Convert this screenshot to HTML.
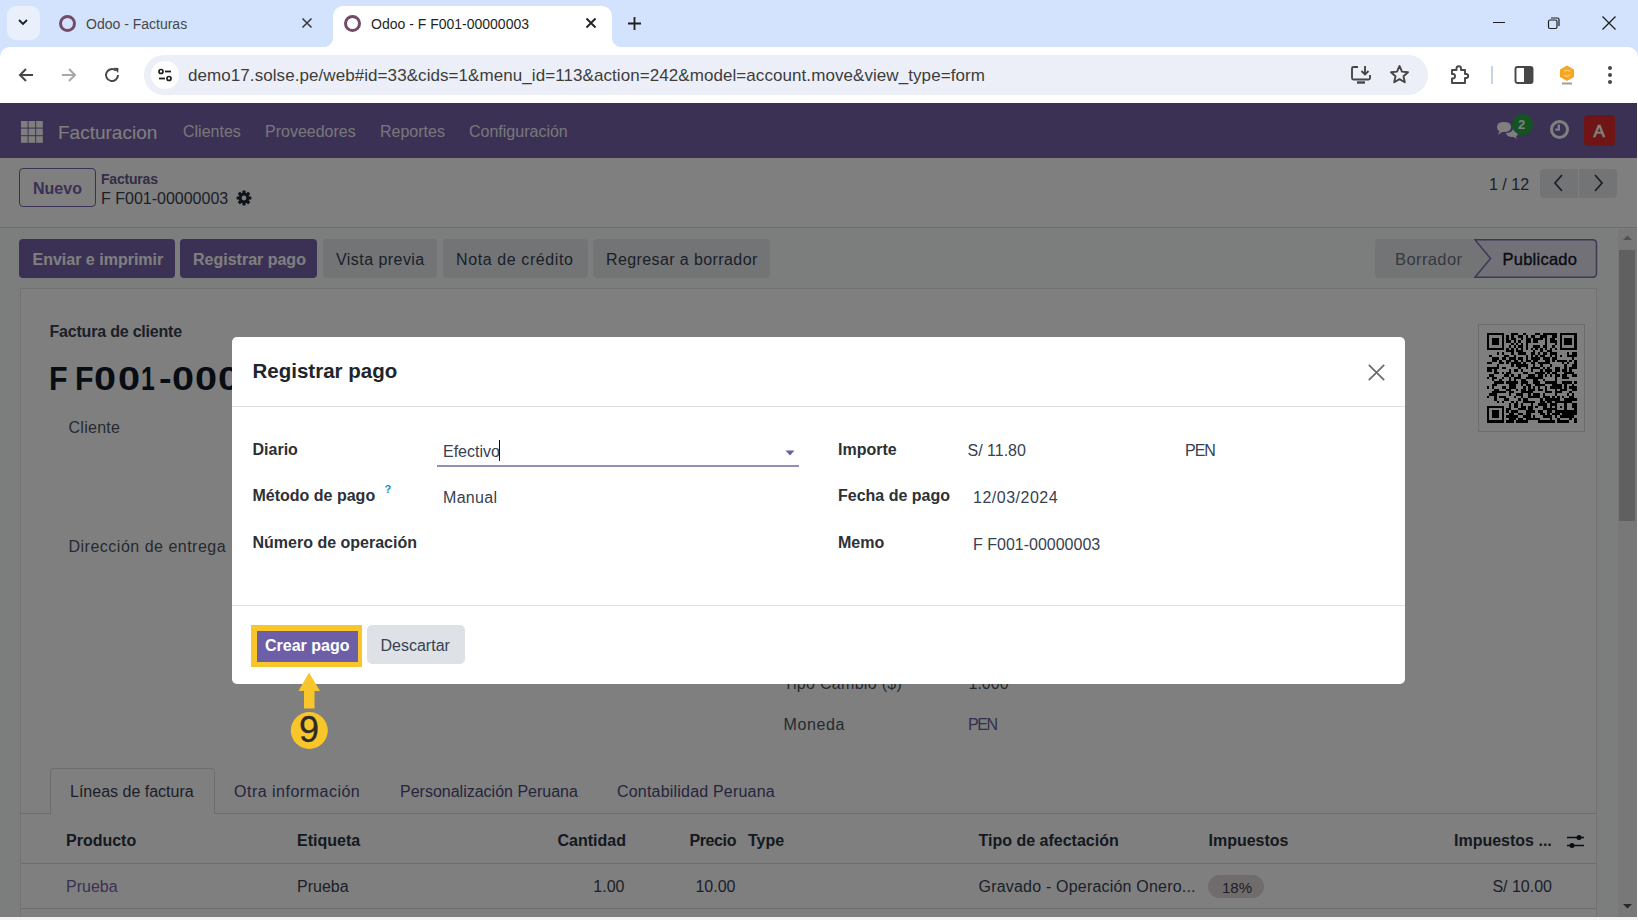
<!DOCTYPE html>
<html><head><meta charset="utf-8">
<style>
*{box-sizing:border-box;margin:0;padding:0}
html,body{width:1638px;height:920px;overflow:hidden;background:#fff;font-family:"Liberation Sans",sans-serif}
.a{position:absolute}
.t{position:absolute;line-height:1;white-space:nowrap}
#chrome{position:absolute;left:0;top:0;width:1638px;height:103px;background:#d3e3fd}
#toolbar{position:absolute;left:0;top:46.5px;width:1638px;height:56.5px;background:#fff;border-radius:10px 10px 0 0}
#page{position:absolute;left:0;top:103px;width:1637px;height:814px;background:#f9fafb;overflow:hidden}
#navbar{position:absolute;left:0;top:0;width:1637px;height:55px;background:#7763a8}
#cp{position:absolute;left:0;top:55px;width:1637px;height:70px;background:#fff;border-bottom:1px solid #d8dadd}
#backdrop{position:absolute;left:0;top:103px;width:1637px;height:814px;background:rgba(0,0,0,.5)}
#modal{position:absolute;left:232px;top:337px;width:1173px;height:347px;background:#fff;border-radius:5px}
</style></head><body>
<div id="chrome">
  <!-- tab search -->
  <div class="a" style="left:7px;top:6px;width:33px;height:34px;border-radius:9px;background:#e9effb"></div>
  <svg class="a" style="left:16px;top:15px" width="14" height="14" viewBox="0 0 14 14"><path d="M3 5 L7 9 L11 5" fill="none" stroke="#1f1f1f" stroke-width="1.8"/></svg>
  <!-- tab 1 -->
  <div class="a" style="left:59px;top:15px;width:17px;height:17px;border-radius:50%;border:3.2px solid #714b67"></div>
  <div class="t" style="left:86px;top:17px;font-size:14px;color:#474747">Odoo - Facturas</div>
  <svg class="a" style="left:300px;top:16px" width="14" height="14" viewBox="0 0 14 14"><path d="M2.5 2.5 L11.5 11.5 M11.5 2.5 L2.5 11.5" stroke="#3c3c3c" stroke-width="1.6"/></svg>
  <!-- active tab -->
  <div class="a" style="left:333px;top:6px;width:279px;height:41px;background:#fff;border-radius:10px 10px 0 0"></div>
  <div class="a" style="left:323px;top:37px;width:10px;height:10px;background:radial-gradient(circle at 0 0,transparent 10px,#fff 10.5px)"></div>
  <div class="a" style="left:612px;top:37px;width:10px;height:10px;background:radial-gradient(circle at 100% 0,transparent 10px,#fff 10.5px)"></div>
  <div class="a" style="left:344px;top:15px;width:17px;height:17px;border-radius:50%;border:3.2px solid #714b67"></div>
  <div class="t" style="left:371px;top:17px;font-size:14px;color:#1f1f1f">Odoo - F F001-00000003</div>
  <svg class="a" style="left:584px;top:16px" width="14" height="14" viewBox="0 0 14 14"><path d="M2.5 2.5 L11.5 11.5 M11.5 2.5 L2.5 11.5" stroke="#1f1f1f" stroke-width="1.8"/></svg>
  <!-- new tab -->
  <svg class="a" style="left:626px;top:15px" width="17" height="17" viewBox="0 0 17 17"><path d="M8.5 2 V15 M2 8.5 H15" stroke="#1f1f1f" stroke-width="1.8"/></svg>
  <!-- window controls -->
  <div class="a" style="left:1493px;top:22px;width:12px;height:1.2px;background:#1f1f1f"></div>
  <svg class="a" style="left:1546px;top:15px" width="16" height="16" viewBox="0 0 16 16"><rect x="2.5" y="5" width="8.5" height="8.5" rx="1.5" fill="none" stroke="#1f1f1f" stroke-width="1.2"/><path d="M5 3 H11.5 Q13 3 13 4.5 V11" fill="none" stroke="#1f1f1f" stroke-width="1.2"/></svg>
  <svg class="a" style="left:1601px;top:15px" width="16" height="16" viewBox="0 0 16 16"><path d="M1.5 1.5 L14.5 14.5 M14.5 1.5 L1.5 14.5" stroke="#1f1f1f" stroke-width="1.3"/></svg>
</div>
<div id="toolbar">
  <svg class="a" style="left:17px;top:19px" width="18" height="18" viewBox="0 0 18 18"><path d="M16 9 H3 M9 3 L3 9 L9 15" fill="none" stroke="#474747" stroke-width="2"/></svg>
  <svg class="a" style="left:60px;top:19px" width="18" height="18" viewBox="0 0 18 18"><path d="M2 9 H15 M9 3 L15 9 L9 15" fill="none" stroke="#a8a8a8" stroke-width="2"/></svg>
  <svg class="a" style="left:103px;top:19px" width="18" height="18" viewBox="0 0 18 18"><path d="M15 9 A6 6 0 1 1 12.8 4.4" fill="none" stroke="#474747" stroke-width="2"/><path d="M10.5 1.8 L15.5 2 L15.2 7 Z" fill="#474747"/></svg>
  <div class="a" style="left:144px;top:8px;width:1284px;height:40px;border-radius:20px;background:#eceff7"></div>
  <div class="a" style="left:151px;top:14px;width:28px;height:28px;border-radius:50%;background:#fff"></div>
  <svg class="a" style="left:156px;top:19px" width="18" height="18" viewBox="0 0 18 18"><circle cx="5" cy="5.5" r="2" fill="none" stroke="#1f1f1f" stroke-width="1.7"/><path d="M9 5.5 H15" stroke="#1f1f1f" stroke-width="1.8"/><circle cx="13" cy="12.5" r="2" fill="none" stroke="#1f1f1f" stroke-width="1.7"/><path d="M3 12.5 H9" stroke="#1f1f1f" stroke-width="1.8"/></svg>
  <!-- right toolbar icons (toolbar top 46) -->
  <svg class="a" style="left:1350px;top:17px" width="22" height="22" viewBox="0 0 22 22"><path d="M8 3 H3.5 Q2 3 2 4.5 V14 Q2 15.5 3.5 15.5 H18.5 Q20 15.5 20 14 V11" fill="none" stroke="#474747" stroke-width="1.9"/><path d="M15 2 V10 M11.5 7 L15 10.5 L18.5 7" fill="none" stroke="#474747" stroke-width="1.9"/><path d="M7 18.5 H15" stroke="#474747" stroke-width="2.4"/></svg>
  <svg class="a" style="left:1389px;top:17px" width="21" height="21" viewBox="0 0 21 21"><path d="M10.5 2 L13 7.6 L19 8.2 L14.5 12.2 L15.8 18.2 L10.5 15.1 L5.2 18.2 L6.5 12.2 L2 8.2 L8 7.6Z" fill="none" stroke="#474747" stroke-width="1.9" stroke-linejoin="round"/></svg>
  <svg class="a" style="left:1449px;top:17px" width="22" height="22" viewBox="0 0 22 22"><path d="M3 6 H7.5 V4.5 Q7.5 2.3 9.8 2.3 Q12 2.3 12 4.5 V6 H16 V10 H17 Q19.2 10 19.2 12 Q19.2 14 17 14 H16 V19 H3 V14.5 H4 Q6 14.5 6 12.3 Q6 10 4 10 H3Z" fill="none" stroke="#474747" stroke-width="1.9" stroke-linejoin="round"/></svg>
  <div class="a" style="left:1491px;top:19px;width:1.5px;height:18px;background:#c7d3e8"></div>
  <svg class="a" style="left:1514px;top:18px" width="20" height="20" viewBox="0 0 20 20"><rect x="1.5" y="2" width="17" height="16" rx="2" fill="none" stroke="#474747" stroke-width="1.9"/><rect x="10" y="2" width="8.5" height="16" fill="#474747"/></svg>
  <svg class="a" style="left:1557px;top:17px" width="20" height="22" viewBox="0 0 20 22"><path d="M10 1.5 L17 5.5 V13 L10 17 L3 13 V5.5Z" fill="#f5a623"/><path d="M7 7.5 Q10 5 13 7.5 M7 11 Q10 13.5 13 11" fill="none" stroke="#ffd27a" stroke-width="1.2"/><rect x="5" y="18.5" width="10" height="2" fill="#9aa0a6"/></svg>
  <svg class="a" style="left:1603px;top:17px" width="14" height="22" viewBox="0 0 14 22"><circle cx="7" cy="4" r="2" fill="#474747"/><circle cx="7" cy="11" r="2" fill="#474747"/><circle cx="7" cy="18" r="2" fill="#474747"/></svg>
  <div class="t" style="left:188px;top:20px;font-size:17px;letter-spacing:.07px;color:#3d3d3d">demo17.solse.pe/web#id=33&amp;cids=1&amp;menu_id=113&amp;action=242&amp;model=account.move&amp;view_type=form</div>
</div>
<div id="page">
  <div id="navbar">
    <svg class="a" style="left:21px;top:17.5px" width="22" height="22" viewBox="0 0 22 22" fill="#fff"><rect x="0" y="0" width="6.6" height="6.6"/><rect x="7.6" y="0" width="6.6" height="6.6"/><rect x="15.2" y="0" width="6.6" height="6.6"/><rect x="0" y="7.6" width="6.6" height="6.6"/><rect x="7.6" y="7.6" width="6.6" height="6.6"/><rect x="15.2" y="7.6" width="6.6" height="6.6"/><rect x="0" y="15.2" width="6.6" height="6.6"/><rect x="7.6" y="15.2" width="6.6" height="6.6"/><rect x="15.2" y="15.2" width="6.6" height="6.6"/></svg>
    <div class="t" style="left:58px;top:19.9px;font-size:19px;color:#fff">Facturacion</div>
    <div class="t" style="left:183px;top:20.5px;font-size:16px;color:rgba(255,255,255,.9)">Clientes</div>
    <div class="t" style="left:265px;top:20.5px;font-size:16px;color:rgba(255,255,255,.9)">Proveedores</div>
    <div class="t" style="left:380px;top:20.5px;font-size:16px;color:rgba(255,255,255,.9)">Reportes</div>
    <div class="t" style="left:469px;top:20.5px;font-size:16px;color:rgba(255,255,255,.9)">Configuración</div>
    <!-- chat icon -->
    <svg class="a" style="left:1496px;top:17px" width="24" height="20" viewBox="0 0 24 20"><path d="M1 7 Q1 2 8 2 Q15 2 15 7 Q15 12 8 12 L6 12 L2 15 L3.5 11 Q1 10 1 7Z" fill="#fff"/><path d="M10 13 Q16 13 17 9 Q22 10 22 13 Q22 15.5 20 16.5 L21 19 L17.5 17 Q11 17.5 10 13Z" fill="#fff"/></svg>
    <div class="a" style="left:1512px;top:11px;width:21px;height:21px;border-radius:50%;background:#28a745"></div>
    <div class="t" style="left:1518px;top:15px;font-size:13px;font-weight:700;color:#fff">2</div>
    <!-- clock -->
    <div class="a" style="left:1549.5px;top:16.5px;width:19px;height:19px;border-radius:50%;border:3.2px solid #fff"></div>
    <svg class="a" style="left:1549px;top:16px" width="20" height="20" viewBox="0 0 20 20"><path d="M9.8 5.5 V10.6 H6.3" fill="none" stroke="#fff" stroke-width="2.4"/></svg>
    <div class="a" style="left:1584px;top:12px;width:31px;height:31px;border-radius:4px;background:#de2a2a"></div>
    <div class="t" style="left:1593.5px;top:19.5px;font-size:17px;color:#fff;-webkit-text-stroke:.7px #fff">A</div>
  </div>
  <div id="cp">
    <div class="a" style="left:19px;top:10px;width:77px;height:39px;border:1px solid #7763a8;border-radius:4px"></div>
    <div class="t" style="left:33px;top:22.5px;font-size:16px;font-weight:700;color:#7763a8">Nuevo</div>
    <div class="t" style="left:101px;top:14px;font-size:14px;font-weight:700;letter-spacing:-.2px;color:#6a5a8e">Facturas</div>
    <div class="t" style="left:101px;top:32.5px;font-size:16px;color:#374151">F F001-00000003</div>
    <svg class="a" style="left:236.4px;top:32px" width="16" height="16" viewBox="0 0 16 16" fill="#1f2937"><rect x="6.4" y="0.6" width="3.2" height="4" rx="0.6" transform="rotate(0 8 8)"/><rect x="6.4" y="0.6" width="3.2" height="4" rx="0.6" transform="rotate(45 8 8)"/><rect x="6.4" y="0.6" width="3.2" height="4" rx="0.6" transform="rotate(90 8 8)"/><rect x="6.4" y="0.6" width="3.2" height="4" rx="0.6" transform="rotate(135 8 8)"/><rect x="6.4" y="0.6" width="3.2" height="4" rx="0.6" transform="rotate(180 8 8)"/><rect x="6.4" y="0.6" width="3.2" height="4" rx="0.6" transform="rotate(225 8 8)"/><rect x="6.4" y="0.6" width="3.2" height="4" rx="0.6" transform="rotate(270 8 8)"/><rect x="6.4" y="0.6" width="3.2" height="4" rx="0.6" transform="rotate(315 8 8)"/><path fill-rule="evenodd" d="M8 2.6 A5.4 5.4 0 1 1 8 13.4 A5.4 5.4 0 1 1 8 2.6Z M8 5.6 A2.4 2.4 0 1 0 8 10.4 A2.4 2.4 0 1 0 8 5.6Z"/></svg>
    <div class="t" style="left:1489px;top:18.9px;font-size:16px;color:#374151">1 / 12</div>
    <div class="a" style="left:1540px;top:10.5px;width:38px;height:29.5px;background:#e7e9ed;border-radius:4px 0 0 4px"></div>
    <div class="a" style="left:1579px;top:10.5px;width:38px;height:29.5px;background:#e7e9ed;border-radius:0 4px 4px 0"></div>
    <svg class="a" style="left:1550px;top:15px" width="18" height="20" viewBox="0 0 18 20"><path d="M12 2 L5 10 L12 18" fill="none" stroke="#374151" stroke-width="1.8"/></svg>
    <svg class="a" style="left:1589px;top:15px" width="18" height="20" viewBox="0 0 18 20"><path d="M6 2 L13 10 L6 18" fill="none" stroke="#374151" stroke-width="1.8"/></svg>
  </div>
  <!-- action buttons (page coords: top 103) -->
  <div class="a" style="left:19px;top:136px;width:156px;height:39px;background:#7763a8;border-radius:4px"></div>
  <div class="t" style="left:32.5px;top:148.5px;font-size:16px;font-weight:700;color:#fff">Enviar e imprimir</div>
  <div class="a" style="left:180px;top:136px;width:137px;height:39px;background:#7763a8;border-radius:4px"></div>
  <div class="t" style="left:193px;top:148.5px;font-size:16px;font-weight:700;color:#fff">Registrar pago</div>
  <div class="a" style="left:323px;top:136px;width:114px;height:39px;background:#e7e9ed;border-radius:4px"></div>
  <div class="t" style="left:336px;top:148.5px;font-size:16px;color:#374151;letter-spacing:.45px">Vista previa</div>
  <div class="a" style="left:443px;top:136px;width:145px;height:39px;background:#e7e9ed;border-radius:4px"></div>
  <div class="t" style="left:456px;top:148.5px;font-size:16px;color:#374151;letter-spacing:.6px">Nota de crédito</div>
  <div class="a" style="left:593px;top:136px;width:177px;height:39px;background:#e7e9ed;border-radius:4px"></div>
  <div class="t" style="left:606px;top:148.5px;font-size:16px;color:#374151;letter-spacing:.4px">Regresar a borrador</div>
  <!-- statusbar -->
  <div class="a" style="left:1375px;top:136px;width:222px;height:39px;background:#e7e9ed;border-radius:4px"></div>
  <svg class="a" style="left:1474px;top:136px" width="124" height="39" viewBox="0 0 124 39"><path d="M1 0.75 H118.5 Q122.5 0.75 122.5 4.75 V34.25 Q122.5 38.25 118.5 38.25 H1 L16.5 19.5 Z" fill="#e6e2f0" stroke="#7a70a8" stroke-width="1.5"/></svg>
  <div class="t" style="left:1395px;top:147.8px;font-size:16.5px;letter-spacing:.4px;color:#6b7280">Borrador</div>
  <div class="t" style="left:1502.5px;top:147.8px;font-size:16.5px;letter-spacing:.25px;color:#111827;-webkit-text-stroke:.35px #111827">Publicado</div>
  <!-- sheet -->
  <div class="a" style="left:20px;top:185px;width:1577px;height:700px;background:#fff;border:1px solid #e3e5e8"></div>
  <div class="t" style="left:49.5px;top:220.5px;font-size:16px;font-weight:700;color:#374151;letter-spacing:-0.2px">Factura de cliente</div>
  
  <div class="t" style="left:49.2px;top:258.5px;font-size:33px;font-weight:700;color:#111827;transform:scaleX(0.92);transform-origin:0 0">F</div><div class="t" style="left:75.4px;top:258.5px;font-size:33px;font-weight:700;color:#111827;transform:scaleX(0.92);transform-origin:0 0">F</div><div class="t" style="left:93.8px;top:258.5px;font-size:33px;font-weight:700;color:#111827;transform:scaleX(1.2);transform-origin:0 0">0</div><div class="t" style="left:117.6px;top:258.5px;font-size:33px;font-weight:700;color:#111827;transform:scaleX(1.2);transform-origin:0 0">0</div><div class="t" style="left:141.1px;top:258.5px;font-size:33px;font-weight:700;color:#111827;transform:scaleX(0.75);transform-origin:0 0">1</div><div class="t" style="left:159.1px;top:258.5px;font-size:33px;font-weight:700;color:#111827;transform:scaleX(1.15);transform-origin:0 0">-</div><div class="t" style="left:171.9px;top:258.5px;font-size:33px;font-weight:700;color:#111827;transform:scaleX(1.2);transform-origin:0 0">0</div><div class="t" style="left:195.1px;top:258.5px;font-size:33px;font-weight:700;color:#111827;transform:scaleX(1.2);transform-origin:0 0">0</div><div class="t" style="left:218.3px;top:258.5px;font-size:33px;font-weight:700;color:#111827;transform:scaleX(1.2);transform-origin:0 0">0</div><div class="t" style="left:241.5px;top:258.5px;font-size:33px;font-weight:700;color:#111827;transform:scaleX(1.2);transform-origin:0 0">0</div>
  <div class="t" style="left:68.5px;top:316.5px;font-size:16px;color:#4b5563;letter-spacing:.27px">Cliente</div>
  <div class="t" style="left:68.5px;top:436px;font-size:16px;color:#4b5563;letter-spacing:.5px">Dirección de entrega</div>
  <!-- qr -->
  <div class="a" style="left:1478px;top:220.5px;width:107px;height:108px;border:1px solid #d8dadd;background:#fff"></div>
  <div id="qr" class="a" style="left:1486.5px;top:229.5px;width:90px;height:90px"><svg width="90" height="90" viewBox="0 0 90 90" fill="#000" shape-rendering="crispEdges"><rect x="0.00" y="0.00" width="16.93" height="2.42"/><rect x="24.19" y="0.00" width="7.26" height="2.42"/><rect x="36.28" y="0.00" width="2.42" height="2.42"/><rect x="48.38" y="0.00" width="4.84" height="2.42"/><rect x="55.64" y="0.00" width="14.51" height="2.42"/><rect x="72.57" y="0.00" width="16.93" height="2.42"/><rect x="0.00" y="2.42" width="2.42" height="2.42"/><rect x="14.51" y="2.42" width="2.42" height="2.42"/><rect x="19.35" y="2.42" width="2.42" height="2.42"/><rect x="24.19" y="2.42" width="2.42" height="2.42"/><rect x="31.45" y="2.42" width="4.84" height="2.42"/><rect x="38.70" y="2.42" width="2.42" height="2.42"/><rect x="43.54" y="2.42" width="4.84" height="2.42"/><rect x="53.22" y="2.42" width="7.26" height="2.42"/><rect x="65.31" y="2.42" width="4.84" height="2.42"/><rect x="72.57" y="2.42" width="2.42" height="2.42"/><rect x="87.08" y="2.42" width="2.42" height="2.42"/><rect x="0.00" y="4.84" width="2.42" height="2.42"/><rect x="4.84" y="4.84" width="7.26" height="2.42"/><rect x="14.51" y="4.84" width="2.42" height="2.42"/><rect x="19.35" y="4.84" width="2.42" height="2.42"/><rect x="24.19" y="4.84" width="4.84" height="2.42"/><rect x="33.86" y="4.84" width="2.42" height="2.42"/><rect x="38.70" y="4.84" width="4.84" height="2.42"/><rect x="45.96" y="4.84" width="9.68" height="2.42"/><rect x="58.05" y="4.84" width="2.42" height="2.42"/><rect x="62.89" y="4.84" width="4.84" height="2.42"/><rect x="72.57" y="4.84" width="2.42" height="2.42"/><rect x="77.41" y="4.84" width="7.26" height="2.42"/><rect x="87.08" y="4.84" width="2.42" height="2.42"/><rect x="0.00" y="7.26" width="2.42" height="2.42"/><rect x="4.84" y="7.26" width="7.26" height="2.42"/><rect x="14.51" y="7.26" width="2.42" height="2.42"/><rect x="19.35" y="7.26" width="4.84" height="2.42"/><rect x="26.61" y="7.26" width="2.42" height="2.42"/><rect x="31.45" y="7.26" width="2.42" height="2.42"/><rect x="38.70" y="7.26" width="4.84" height="2.42"/><rect x="45.96" y="7.26" width="4.84" height="2.42"/><rect x="58.05" y="7.26" width="2.42" height="2.42"/><rect x="62.89" y="7.26" width="7.26" height="2.42"/><rect x="72.57" y="7.26" width="2.42" height="2.42"/><rect x="77.41" y="7.26" width="7.26" height="2.42"/><rect x="87.08" y="7.26" width="2.42" height="2.42"/><rect x="0.00" y="9.68" width="2.42" height="2.42"/><rect x="4.84" y="9.68" width="7.26" height="2.42"/><rect x="14.51" y="9.68" width="2.42" height="2.42"/><rect x="24.19" y="9.68" width="2.42" height="2.42"/><rect x="29.03" y="9.68" width="2.42" height="2.42"/><rect x="33.86" y="9.68" width="2.42" height="2.42"/><rect x="38.70" y="9.68" width="2.42" height="2.42"/><rect x="58.05" y="9.68" width="2.42" height="2.42"/><rect x="67.73" y="9.68" width="2.42" height="2.42"/><rect x="72.57" y="9.68" width="2.42" height="2.42"/><rect x="77.41" y="9.68" width="7.26" height="2.42"/><rect x="87.08" y="9.68" width="2.42" height="2.42"/><rect x="0.00" y="12.09" width="2.42" height="2.42"/><rect x="14.51" y="12.09" width="2.42" height="2.42"/><rect x="21.77" y="12.09" width="2.42" height="2.42"/><rect x="26.61" y="12.09" width="2.42" height="2.42"/><rect x="31.45" y="12.09" width="4.84" height="2.42"/><rect x="38.70" y="12.09" width="2.42" height="2.42"/><rect x="45.96" y="12.09" width="7.26" height="2.42"/><rect x="55.64" y="12.09" width="4.84" height="2.42"/><rect x="65.31" y="12.09" width="2.42" height="2.42"/><rect x="72.57" y="12.09" width="2.42" height="2.42"/><rect x="87.08" y="12.09" width="2.42" height="2.42"/><rect x="0.00" y="14.51" width="16.93" height="2.42"/><rect x="19.35" y="14.51" width="2.42" height="2.42"/><rect x="24.19" y="14.51" width="2.42" height="2.42"/><rect x="29.03" y="14.51" width="2.42" height="2.42"/><rect x="33.86" y="14.51" width="2.42" height="2.42"/><rect x="38.70" y="14.51" width="2.42" height="2.42"/><rect x="43.54" y="14.51" width="2.42" height="2.42"/><rect x="48.38" y="14.51" width="2.42" height="2.42"/><rect x="53.22" y="14.51" width="2.42" height="2.42"/><rect x="58.05" y="14.51" width="2.42" height="2.42"/><rect x="62.89" y="14.51" width="2.42" height="2.42"/><rect x="67.73" y="14.51" width="2.42" height="2.42"/><rect x="72.57" y="14.51" width="16.93" height="2.42"/><rect x="19.35" y="16.93" width="7.26" height="2.42"/><rect x="29.03" y="16.93" width="7.26" height="2.42"/><rect x="45.96" y="16.93" width="2.42" height="2.42"/><rect x="53.22" y="16.93" width="2.42" height="2.42"/><rect x="60.47" y="16.93" width="4.84" height="2.42"/><rect x="9.68" y="19.35" width="2.42" height="2.42"/><rect x="14.51" y="19.35" width="2.42" height="2.42"/><rect x="24.19" y="19.35" width="2.42" height="2.42"/><rect x="31.45" y="19.35" width="7.26" height="2.42"/><rect x="43.54" y="19.35" width="4.84" height="2.42"/><rect x="50.80" y="19.35" width="2.42" height="2.42"/><rect x="55.64" y="19.35" width="4.84" height="2.42"/><rect x="62.89" y="19.35" width="7.26" height="2.42"/><rect x="79.82" y="19.35" width="2.42" height="2.42"/><rect x="84.66" y="19.35" width="4.84" height="2.42"/><rect x="2.42" y="21.77" width="2.42" height="2.42"/><rect x="16.93" y="21.77" width="4.84" height="2.42"/><rect x="26.61" y="21.77" width="2.42" height="2.42"/><rect x="38.70" y="21.77" width="2.42" height="2.42"/><rect x="43.54" y="21.77" width="2.42" height="2.42"/><rect x="48.38" y="21.77" width="2.42" height="2.42"/><rect x="53.22" y="21.77" width="4.84" height="2.42"/><rect x="62.89" y="21.77" width="2.42" height="2.42"/><rect x="67.73" y="21.77" width="2.42" height="2.42"/><rect x="72.57" y="21.77" width="2.42" height="2.42"/><rect x="79.82" y="21.77" width="9.68" height="2.42"/><rect x="4.84" y="24.19" width="7.26" height="2.42"/><rect x="14.51" y="24.19" width="4.84" height="2.42"/><rect x="21.77" y="24.19" width="7.26" height="2.42"/><rect x="31.45" y="24.19" width="4.84" height="2.42"/><rect x="38.70" y="24.19" width="2.42" height="2.42"/><rect x="43.54" y="24.19" width="9.68" height="2.42"/><rect x="55.64" y="24.19" width="7.26" height="2.42"/><rect x="65.31" y="24.19" width="4.84" height="2.42"/><rect x="84.66" y="24.19" width="2.42" height="2.42"/><rect x="4.84" y="26.61" width="4.84" height="2.42"/><rect x="12.09" y="26.61" width="2.42" height="2.42"/><rect x="19.35" y="26.61" width="4.84" height="2.42"/><rect x="26.61" y="26.61" width="4.84" height="2.42"/><rect x="33.86" y="26.61" width="2.42" height="2.42"/><rect x="38.70" y="26.61" width="4.84" height="2.42"/><rect x="45.96" y="26.61" width="4.84" height="2.42"/><rect x="58.05" y="26.61" width="4.84" height="2.42"/><rect x="65.31" y="26.61" width="2.42" height="2.42"/><rect x="70.15" y="26.61" width="9.68" height="2.42"/><rect x="82.24" y="26.61" width="2.42" height="2.42"/><rect x="87.08" y="26.61" width="2.42" height="2.42"/><rect x="0.00" y="29.03" width="4.84" height="2.42"/><rect x="12.09" y="29.03" width="4.84" height="2.42"/><rect x="19.35" y="29.03" width="2.42" height="2.42"/><rect x="24.19" y="29.03" width="9.68" height="2.42"/><rect x="36.28" y="29.03" width="2.42" height="2.42"/><rect x="43.54" y="29.03" width="4.84" height="2.42"/><rect x="50.80" y="29.03" width="12.09" height="2.42"/><rect x="74.99" y="29.03" width="2.42" height="2.42"/><rect x="79.82" y="29.03" width="2.42" height="2.42"/><rect x="87.08" y="29.03" width="2.42" height="2.42"/><rect x="9.68" y="31.45" width="2.42" height="2.42"/><rect x="24.19" y="31.45" width="2.42" height="2.42"/><rect x="29.03" y="31.45" width="12.09" height="2.42"/><rect x="45.96" y="31.45" width="2.42" height="2.42"/><rect x="53.22" y="31.45" width="2.42" height="2.42"/><rect x="62.89" y="31.45" width="2.42" height="2.42"/><rect x="77.41" y="31.45" width="2.42" height="2.42"/><rect x="84.66" y="31.45" width="4.84" height="2.42"/><rect x="0.00" y="33.86" width="12.09" height="2.42"/><rect x="14.51" y="33.86" width="4.84" height="2.42"/><rect x="31.45" y="33.86" width="2.42" height="2.42"/><rect x="38.70" y="33.86" width="2.42" height="2.42"/><rect x="43.54" y="33.86" width="9.68" height="2.42"/><rect x="55.64" y="33.86" width="2.42" height="2.42"/><rect x="60.47" y="33.86" width="2.42" height="2.42"/><rect x="67.73" y="33.86" width="4.84" height="2.42"/><rect x="77.41" y="33.86" width="2.42" height="2.42"/><rect x="82.24" y="33.86" width="7.26" height="2.42"/><rect x="0.00" y="36.28" width="4.84" height="2.42"/><rect x="7.26" y="36.28" width="2.42" height="2.42"/><rect x="21.77" y="36.28" width="2.42" height="2.42"/><rect x="26.61" y="36.28" width="4.84" height="2.42"/><rect x="33.86" y="36.28" width="2.42" height="2.42"/><rect x="43.54" y="36.28" width="2.42" height="2.42"/><rect x="53.22" y="36.28" width="2.42" height="2.42"/><rect x="58.05" y="36.28" width="7.26" height="2.42"/><rect x="67.73" y="36.28" width="4.84" height="2.42"/><rect x="74.99" y="36.28" width="4.84" height="2.42"/><rect x="82.24" y="36.28" width="2.42" height="2.42"/><rect x="7.26" y="38.70" width="4.84" height="2.42"/><rect x="14.51" y="38.70" width="2.42" height="2.42"/><rect x="19.35" y="38.70" width="4.84" height="2.42"/><rect x="36.28" y="38.70" width="4.84" height="2.42"/><rect x="48.38" y="38.70" width="9.68" height="2.42"/><rect x="60.47" y="38.70" width="2.42" height="2.42"/><rect x="65.31" y="38.70" width="4.84" height="2.42"/><rect x="77.41" y="38.70" width="9.68" height="2.42"/><rect x="2.42" y="41.12" width="4.84" height="2.42"/><rect x="16.93" y="41.12" width="4.84" height="2.42"/><rect x="24.19" y="41.12" width="2.42" height="2.42"/><rect x="31.45" y="41.12" width="2.42" height="2.42"/><rect x="41.12" y="41.12" width="7.26" height="2.42"/><rect x="50.80" y="41.12" width="4.84" height="2.42"/><rect x="58.05" y="41.12" width="2.42" height="2.42"/><rect x="62.89" y="41.12" width="2.42" height="2.42"/><rect x="67.73" y="41.12" width="4.84" height="2.42"/><rect x="74.99" y="41.12" width="4.84" height="2.42"/><rect x="84.66" y="41.12" width="4.84" height="2.42"/><rect x="0.00" y="43.54" width="2.42" height="2.42"/><rect x="4.84" y="43.54" width="4.84" height="2.42"/><rect x="14.51" y="43.54" width="2.42" height="2.42"/><rect x="21.77" y="43.54" width="2.42" height="2.42"/><rect x="26.61" y="43.54" width="7.26" height="2.42"/><rect x="38.70" y="43.54" width="16.93" height="2.42"/><rect x="67.73" y="43.54" width="2.42" height="2.42"/><rect x="74.99" y="43.54" width="7.26" height="2.42"/><rect x="4.84" y="45.96" width="2.42" height="2.42"/><rect x="12.09" y="45.96" width="2.42" height="2.42"/><rect x="21.77" y="45.96" width="2.42" height="2.42"/><rect x="26.61" y="45.96" width="2.42" height="2.42"/><rect x="33.86" y="45.96" width="4.84" height="2.42"/><rect x="45.96" y="45.96" width="4.84" height="2.42"/><rect x="55.64" y="45.96" width="2.42" height="2.42"/><rect x="67.73" y="45.96" width="2.42" height="2.42"/><rect x="7.26" y="48.38" width="9.68" height="2.42"/><rect x="19.35" y="48.38" width="12.09" height="2.42"/><rect x="33.86" y="48.38" width="7.26" height="2.42"/><rect x="45.96" y="48.38" width="7.26" height="2.42"/><rect x="58.05" y="48.38" width="12.09" height="2.42"/><rect x="74.99" y="48.38" width="9.68" height="2.42"/><rect x="87.08" y="48.38" width="2.42" height="2.42"/><rect x="4.84" y="50.80" width="4.84" height="2.42"/><rect x="21.77" y="50.80" width="7.26" height="2.42"/><rect x="33.86" y="50.80" width="2.42" height="2.42"/><rect x="38.70" y="50.80" width="4.84" height="2.42"/><rect x="48.38" y="50.80" width="9.68" height="2.42"/><rect x="65.31" y="50.80" width="9.68" height="2.42"/><rect x="77.41" y="50.80" width="2.42" height="2.42"/><rect x="84.66" y="50.80" width="2.42" height="2.42"/><rect x="0.00" y="53.22" width="2.42" height="2.42"/><rect x="4.84" y="53.22" width="2.42" height="2.42"/><rect x="14.51" y="53.22" width="4.84" height="2.42"/><rect x="21.77" y="53.22" width="7.26" height="2.42"/><rect x="36.28" y="53.22" width="2.42" height="2.42"/><rect x="41.12" y="53.22" width="2.42" height="2.42"/><rect x="45.96" y="53.22" width="2.42" height="2.42"/><rect x="50.80" y="53.22" width="2.42" height="2.42"/><rect x="58.05" y="53.22" width="2.42" height="2.42"/><rect x="62.89" y="53.22" width="12.09" height="2.42"/><rect x="77.41" y="53.22" width="2.42" height="2.42"/><rect x="82.24" y="53.22" width="7.26" height="2.42"/><rect x="7.26" y="55.64" width="4.84" height="2.42"/><rect x="19.35" y="55.64" width="4.84" height="2.42"/><rect x="29.03" y="55.64" width="2.42" height="2.42"/><rect x="33.86" y="55.64" width="4.84" height="2.42"/><rect x="41.12" y="55.64" width="7.26" height="2.42"/><rect x="50.80" y="55.64" width="4.84" height="2.42"/><rect x="58.05" y="55.64" width="2.42" height="2.42"/><rect x="67.73" y="55.64" width="2.42" height="2.42"/><rect x="72.57" y="55.64" width="7.26" height="2.42"/><rect x="84.66" y="55.64" width="4.84" height="2.42"/><rect x="4.84" y="58.05" width="14.51" height="2.42"/><rect x="21.77" y="58.05" width="4.84" height="2.42"/><rect x="33.86" y="58.05" width="12.09" height="2.42"/><rect x="58.05" y="58.05" width="7.26" height="2.42"/><rect x="67.73" y="58.05" width="7.26" height="2.42"/><rect x="82.24" y="58.05" width="2.42" height="2.42"/><rect x="2.42" y="60.47" width="7.26" height="2.42"/><rect x="21.77" y="60.47" width="2.42" height="2.42"/><rect x="29.03" y="60.47" width="7.26" height="2.42"/><rect x="41.12" y="60.47" width="2.42" height="2.42"/><rect x="45.96" y="60.47" width="7.26" height="2.42"/><rect x="55.64" y="60.47" width="2.42" height="2.42"/><rect x="67.73" y="60.47" width="2.42" height="2.42"/><rect x="79.82" y="60.47" width="2.42" height="2.42"/><rect x="84.66" y="60.47" width="2.42" height="2.42"/><rect x="0.00" y="62.89" width="2.42" height="2.42"/><rect x="7.26" y="62.89" width="2.42" height="2.42"/><rect x="12.09" y="62.89" width="7.26" height="2.42"/><rect x="26.61" y="62.89" width="2.42" height="2.42"/><rect x="33.86" y="62.89" width="2.42" height="2.42"/><rect x="41.12" y="62.89" width="12.09" height="2.42"/><rect x="55.64" y="62.89" width="7.26" height="2.42"/><rect x="65.31" y="62.89" width="2.42" height="2.42"/><rect x="70.15" y="62.89" width="2.42" height="2.42"/><rect x="74.99" y="62.89" width="2.42" height="2.42"/><rect x="82.24" y="62.89" width="4.84" height="2.42"/><rect x="7.26" y="65.31" width="2.42" height="2.42"/><rect x="16.93" y="65.31" width="4.84" height="2.42"/><rect x="31.45" y="65.31" width="2.42" height="2.42"/><rect x="36.28" y="65.31" width="4.84" height="2.42"/><rect x="53.22" y="65.31" width="2.42" height="2.42"/><rect x="58.05" y="65.31" width="14.51" height="2.42"/><rect x="77.41" y="65.31" width="12.09" height="2.42"/><rect x="9.68" y="67.73" width="2.42" height="2.42"/><rect x="14.51" y="67.73" width="2.42" height="2.42"/><rect x="24.19" y="67.73" width="2.42" height="2.42"/><rect x="29.03" y="67.73" width="2.42" height="2.42"/><rect x="36.28" y="67.73" width="12.09" height="2.42"/><rect x="53.22" y="67.73" width="4.84" height="2.42"/><rect x="60.47" y="67.73" width="4.84" height="2.42"/><rect x="67.73" y="67.73" width="16.93" height="2.42"/><rect x="21.77" y="70.15" width="2.42" height="2.42"/><rect x="26.61" y="70.15" width="4.84" height="2.42"/><rect x="33.86" y="70.15" width="2.42" height="2.42"/><rect x="43.54" y="70.15" width="2.42" height="2.42"/><rect x="50.80" y="70.15" width="9.68" height="2.42"/><rect x="62.89" y="70.15" width="7.26" height="2.42"/><rect x="77.41" y="70.15" width="2.42" height="2.42"/><rect x="84.66" y="70.15" width="4.84" height="2.42"/><rect x="0.00" y="72.57" width="16.93" height="2.42"/><rect x="21.77" y="72.57" width="2.42" height="2.42"/><rect x="26.61" y="72.57" width="4.84" height="2.42"/><rect x="33.86" y="72.57" width="4.84" height="2.42"/><rect x="41.12" y="72.57" width="4.84" height="2.42"/><rect x="48.38" y="72.57" width="2.42" height="2.42"/><rect x="55.64" y="72.57" width="4.84" height="2.42"/><rect x="62.89" y="72.57" width="2.42" height="2.42"/><rect x="67.73" y="72.57" width="2.42" height="2.42"/><rect x="72.57" y="72.57" width="2.42" height="2.42"/><rect x="77.41" y="72.57" width="2.42" height="2.42"/><rect x="84.66" y="72.57" width="4.84" height="2.42"/><rect x="0.00" y="74.99" width="2.42" height="2.42"/><rect x="14.51" y="74.99" width="2.42" height="2.42"/><rect x="19.35" y="74.99" width="4.84" height="2.42"/><rect x="31.45" y="74.99" width="7.26" height="2.42"/><rect x="41.12" y="74.99" width="4.84" height="2.42"/><rect x="55.64" y="74.99" width="14.51" height="2.42"/><rect x="77.41" y="74.99" width="2.42" height="2.42"/><rect x="87.08" y="74.99" width="2.42" height="2.42"/><rect x="0.00" y="77.41" width="2.42" height="2.42"/><rect x="4.84" y="77.41" width="7.26" height="2.42"/><rect x="14.51" y="77.41" width="2.42" height="2.42"/><rect x="19.35" y="77.41" width="2.42" height="2.42"/><rect x="24.19" y="77.41" width="7.26" height="2.42"/><rect x="38.70" y="77.41" width="9.68" height="2.42"/><rect x="50.80" y="77.41" width="4.84" height="2.42"/><rect x="60.47" y="77.41" width="4.84" height="2.42"/><rect x="67.73" y="77.41" width="21.77" height="2.42"/><rect x="0.00" y="79.82" width="2.42" height="2.42"/><rect x="4.84" y="79.82" width="7.26" height="2.42"/><rect x="14.51" y="79.82" width="2.42" height="2.42"/><rect x="21.77" y="79.82" width="4.84" height="2.42"/><rect x="31.45" y="79.82" width="4.84" height="2.42"/><rect x="38.70" y="79.82" width="4.84" height="2.42"/><rect x="53.22" y="79.82" width="4.84" height="2.42"/><rect x="60.47" y="79.82" width="2.42" height="2.42"/><rect x="65.31" y="79.82" width="7.26" height="2.42"/><rect x="74.99" y="79.82" width="14.51" height="2.42"/><rect x="0.00" y="82.24" width="2.42" height="2.42"/><rect x="4.84" y="82.24" width="7.26" height="2.42"/><rect x="14.51" y="82.24" width="2.42" height="2.42"/><rect x="19.35" y="82.24" width="12.09" height="2.42"/><rect x="36.28" y="82.24" width="7.26" height="2.42"/><rect x="45.96" y="82.24" width="2.42" height="2.42"/><rect x="55.64" y="82.24" width="9.68" height="2.42"/><rect x="67.73" y="82.24" width="2.42" height="2.42"/><rect x="72.57" y="82.24" width="14.51" height="2.42"/><rect x="0.00" y="84.66" width="2.42" height="2.42"/><rect x="14.51" y="84.66" width="2.42" height="2.42"/><rect x="21.77" y="84.66" width="7.26" height="2.42"/><rect x="31.45" y="84.66" width="4.84" height="2.42"/><rect x="38.70" y="84.66" width="14.51" height="2.42"/><rect x="62.89" y="84.66" width="2.42" height="2.42"/><rect x="70.15" y="84.66" width="2.42" height="2.42"/><rect x="82.24" y="84.66" width="2.42" height="2.42"/><rect x="87.08" y="84.66" width="2.42" height="2.42"/><rect x="0.00" y="87.08" width="16.93" height="2.42"/><rect x="19.35" y="87.08" width="7.26" height="2.42"/><rect x="29.03" y="87.08" width="12.09" height="2.42"/><rect x="50.80" y="87.08" width="16.93" height="2.42"/><rect x="70.15" y="87.08" width="12.09" height="2.42"/><rect x="87.08" y="87.08" width="2.42" height="2.42"/></svg></div>
  <div class="t" style="left:783.5px;top:572.7px;font-size:16px;color:#4b5563;letter-spacing:.3px">Tipo Cambio ($)</div>
  <div class="t" style="left:968.5px;top:572.7px;font-size:16px;color:#4b5563">1.000</div>
  <div class="t" style="left:783.5px;top:613.5px;font-size:16px;color:#4b5563;letter-spacing:.6px">Moneda</div>
  <div class="t" style="left:968px;top:613.5px;font-size:16px;color:#6a5e9a;letter-spacing:-1.4px">PEN</div>
  <!-- notebook tabs -->
  <div class="a" style="left:20px;top:710px;width:1577px;height:1px;background:#d8dadd"></div>
  <div class="a" style="left:49.5px;top:665px;width:165px;height:46px;background:#fff;border:1px solid #d8dadd;border-bottom:none;border-radius:4px 4px 0 0"></div>
  <div class="t" style="left:70px;top:681px;font-size:16px;color:#374151">Líneas de factura</div>
  <div class="t" style="left:234px;top:681px;font-size:16px;color:#4d4a7a;letter-spacing:.5px">Otra información</div>
  <div class="t" style="left:400px;top:681px;font-size:16px;color:#4d4a7a">Personalización Peruana</div>
  <div class="t" style="left:617px;top:681px;font-size:16px;color:#4d4a7a;letter-spacing:.2px">Contabilidad Peruana</div>
  <!-- table -->
  <div class="a" style="left:21px;top:759.5px;width:1575px;height:1px;background:#d8dadd"></div>
  <div class="a" style="left:21px;top:805px;width:1575px;height:1px;background:#d8dadd"></div>
  <div class="t" style="left:66px;top:729.8px;font-size:16px;font-weight:700;color:#2b3340">Producto</div>
  <div class="t" style="left:297px;top:729.8px;font-size:16px;font-weight:700;color:#2b3340">Etiqueta</div>
  <div class="t" style="left:557.5px;top:729.8px;font-size:16px;font-weight:700;color:#2b3340">Cantidad</div>
  <div class="t" style="left:689.5px;top:729.8px;font-size:16px;font-weight:700;color:#2b3340;letter-spacing:-.4px">Precio</div>
  <div class="t" style="left:748px;top:729.8px;font-size:16px;font-weight:700;color:#2b3340">Type</div>
  <div class="t" style="left:978.5px;top:729.8px;font-size:16px;font-weight:700;color:#2b3340">Tipo de afectación</div>
  <div class="t" style="left:1208.5px;top:729.8px;font-size:16px;font-weight:700;color:#2b3340">Impuestos</div>
  <div class="t" style="left:1454px;top:729.8px;font-size:16px;font-weight:700;color:#2b3340">Impuestos ...</div>
  <svg class="a" style="left:1566px;top:731px" width="19" height="16" viewBox="0 0 19 16"><path d="M1 3.5 H18 M1 11.5 H18" stroke="#111827" stroke-width="1.6"/><circle cx="13" cy="3.5" r="2.5" fill="#111827"/><circle cx="6" cy="11.5" r="2.5" fill="#111827"/></svg>
  <div class="t" style="left:66px;top:776px;font-size:16px;color:#7763a8">Prueba</div>
  <div class="t" style="left:297px;top:776px;font-size:16px;color:#374151">Prueba</div>
  <div class="t" style="left:624.5px;top:776px;font-size:16px;color:#374151;transform:translateX(-100%)">1.00</div>
  <div class="t" style="left:735.5px;top:776px;font-size:16px;color:#374151;transform:translateX(-100%)">10.00</div>
  <div class="t" style="left:978.5px;top:776px;font-size:16px;color:#374151;letter-spacing:.2px">Gravado - Operación Onero...</div>
  <div class="a" style="left:1208px;top:772px;width:56px;height:23px;border-radius:12px;background:#e2d9d9"></div>
  <div class="t" style="left:1222px;top:776.5px;font-size:15px;color:#374151">18%</div>
  <div class="t" style="left:1552px;top:776px;font-size:16px;color:#374151;transform:translateX(-100%)">S/ 10.00</div>
  <!-- scrollbar -->
  <div class="a" style="left:1618px;top:126px;width:19px;height:688px;background:#f1f1f1"></div>
  <div class="a" style="left:1619px;top:146.5px;width:15.5px;height:271px;background:#c1c1c1"></div>
  <svg class="a" style="left:1619.5px;top:130px" width="15" height="10" viewBox="0 0 15 10"><path d="M3 7 L7.5 2.5 L12 7Z" fill="#a3a3a3"/></svg>
  <svg class="a" style="left:1619.5px;top:798px" width="15" height="10" viewBox="0 0 15 10"><path d="M3 3 L7.5 7.5 L12 3Z" fill="#505050"/></svg>
</div>
<div id="backdrop"></div>
<div id="modal">
  <div class="t" style="left:20.5px;top:24px;font-size:20.5px;font-weight:700;color:#212529">Registrar pago</div>
  <svg class="a" style="left:1136px;top:27px" width="17" height="17" viewBox="0 0 17 17"><path d="M0.8 0.8 L16.2 16.2 M16.2 0.8 L0.8 16.2" stroke="#6b6b6b" stroke-width="1.7"/></svg>
  <div class="a" style="left:0;top:68.5px;width:1173px;height:1px;background:#dee2e6"></div>
  <!-- left col -->
  <div class="t" style="left:20.5px;top:104.9px;font-size:16px;font-weight:700;color:#2d3136">Diario</div>
  <div class="t" style="left:211px;top:106.5px;font-size:16px;color:#374151">Efectivo</div>
  <div class="a" style="left:267px;top:103px;width:1.3px;height:21px;background:#111"></div>
  <div class="a" style="left:205px;top:128px;width:362px;height:1.5px;background:#958db3"></div>
  <svg class="a" style="left:553px;top:113px" width="10" height="6" viewBox="0 0 10 6"><path d="M0.5 0.5 H9.5 L5 5.5Z" fill="#6a5ea4"/></svg>
  <div class="t" style="left:20.5px;top:151.2px;font-size:16px;font-weight:700;color:#2d3136">Método de pago</div>
  <div class="t" style="left:152.5px;top:147px;font-size:11px;font-weight:700;color:#1a8fc8">?</div>
  <div class="t" style="left:211px;top:153px;font-size:16px;color:#374151;letter-spacing:.3px">Manual</div>
  <div class="t" style="left:20.5px;top:197.5px;font-size:16px;font-weight:700;color:#2d3136">Número de operación</div>
  <!-- right col -->
  <div class="t" style="left:606px;top:104.9px;font-size:16px;font-weight:700;color:#2d3136">Importe</div>
  <div class="t" style="left:735.5px;top:106px;font-size:16px;color:#374151">S/ 11.80</div>
  <div class="t" style="left:953px;top:106px;font-size:16px;color:#374151;letter-spacing:-1px">PEN</div>
  <div class="t" style="left:606px;top:151.2px;font-size:16px;font-weight:700;color:#2d3136">Fecha de pago</div>
  <div class="t" style="left:741px;top:152.5px;font-size:16px;color:#374151;letter-spacing:.5px">12/03/2024</div>
  <div class="t" style="left:606px;top:197.5px;font-size:16px;font-weight:700;color:#2d3136">Memo</div>
  <div class="t" style="left:741px;top:200px;font-size:16px;color:#374151">F F001-00000003</div>
  <div class="a" style="left:0;top:267.5px;width:1173px;height:1px;background:#dee2e6"></div>
  <!-- footer -->
  <div class="a" style="left:19px;top:288px;width:111px;height:41.5px;background:#f8c52a"></div>
  <div class="a" style="left:25px;top:293.5px;width:101px;height:31px;background:#6d5fa7"></div>
  <div class="t" style="left:33px;top:301px;font-size:16px;font-weight:700;color:#fff">Crear pago</div>
  <div class="a" style="left:135px;top:288px;width:98px;height:39px;background:#dee1e6;border-radius:5px"></div>
  <div class="t" style="left:148.5px;top:301px;font-size:16px;color:#374151">Descartar</div>
</div>
<!-- annotation -->
<svg class="a" style="left:290px;top:670px" width="40" height="80" viewBox="0 0 40 80"><path d="M19 2.5 L30 21 H24.5 V38.5 H14 V21 H8.5Z" fill="#f8c52a"/><circle cx="19.3" cy="60.5" r="18.5" fill="#f8c52a"/></svg>
<div class="t" style="left:299px;top:712px;font-size:36px;color:#2b2b2b;-webkit-text-stroke:.3px #2b2b2b">9</div>
<div class="a" style="left:0;top:917px;width:1638px;height:3px;background:#f3f3f3"></div>
</body></html>
